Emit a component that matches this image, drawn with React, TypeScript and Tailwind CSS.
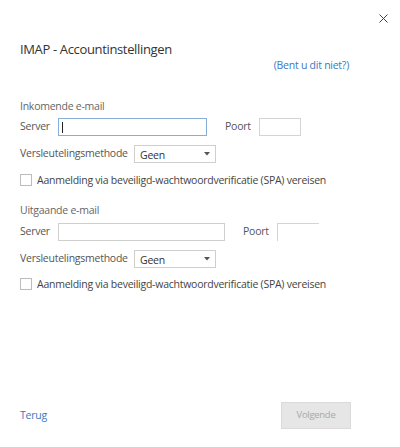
// IMAP-accountinstellingen dialoog (Outlook-stijl)

const Arrow = () => (
  <svg width="6" height="4" viewBox="0 0 6 4" className="text-[#555]">
    <path d="M0 0 H6 L3 3.5 Z" fill="currentColor" />
  </svg>
)

const Select = () => (
  <div className="w-[82px] h-[18px] border border-[#cfcfcf] flex items-center justify-between pl-[5px] pr-[5px] text-[10.5px] tracking-[-0.25px] text-[#333]">
    <span className="leading-none pt-[2px]">Geen</span>
    <Arrow />
  </div>
)

const Checkbox = ({ label }: { label: string }) => (
  <label className="flex items-center h-[12px]">
    <span className="w-[12px] h-[12px] border border-[#bdbdbd] bg-white shrink-0" />
    <span className="ml-[5px] text-[10.5px] tracking-[-0.25px] text-[#444] leading-none">{label}</span>
  </label>
)

const ServerSection = ({
  title,
  serverWidth,
  focused,
  titleGap,
  rowGap,
}: {
  title: string
  serverWidth: string
  focused?: boolean
  titleGap: string
  rowGap: string
}) => (
  <section className="flex flex-col text-[10.5px] tracking-[-0.25px]">
    <h2 className="leading-[14px] text-[#666]">{title}</h2>
    <div className={`flex items-center h-[18px] ${titleGap}`}>
      <span className="w-[38px] text-[#555]">Server</span>
      {focused ? (
        <div className={`${serverWidth} h-[18px] border border-[#86aedb] flex items-center pl-[3px]`}>
          <span className="w-px h-[11px] bg-[#222]" />
        </div>
      ) : (
        <div className={`${serverWidth} h-[18px] border border-[#cfcfcf]`} />
      )}
      <span className="ml-[18px] w-[34px] text-[#555]">Poort</span>
      {focused ? (
        <div className="w-[42px] h-[18px] border border-[#d4d4d4]" />
      ) : (
        <div className="w-[42px] h-[18px] border-l border-t border-[#d4d4d4]" />
      )}
    </div>
    <div className="flex items-center h-[18px] mt-[9px]">
      <span className="w-[114px] text-[#555]">Versleutelingsmethode</span>
      <Select />
    </div>
    <div className={rowGap}>
      <Checkbox label="Aanmelding via beveiligd-wachtwoordverificatie (SPA) vereisen" />
    </div>
  </section>
)

export default function App() {
  return (
    <div className="w-[400px] h-[447px] bg-white flex flex-col font-['Open_Sans',sans-serif] pl-[20px]">
      <div className="flex justify-end pt-[14px] pr-[12px]">
        <svg width="9" height="9" viewBox="0 0 9 9" className="text-[#444]">
          <path d="M0.5 0.5 L8.5 8.5 M8.5 0.5 L0.5 8.5" stroke="currentColor" strokeWidth="1" />
        </svg>
      </div>

      <h1 className="mt-[18px] text-[13px] tracking-[-0.35px] leading-[16px] text-[#333]">
        IMAP - Accountinstellingen
      </h1>
      <div className="flex justify-end pr-[51px] mt-[1px]">
        <a className="text-[10.5px] tracking-[-0.25px] leading-[14px] text-[#3a78c2]">(Bent u dit niet?)</a>
      </div>

      <div className="mt-[27px]">
        <ServerSection
          title="Inkomende e-mail"
          serverWidth="w-[149px]"
          focused
          titleGap="mt-[5px]"
          rowGap="mt-[11px]"
        />
      </div>

      <div className="mt-[17px]">
        <ServerSection
          title="Uitgaande e-mail"
          serverWidth="w-[167px]"
          titleGap="mt-[6px]"
          rowGap="mt-[10px]"
        />
      </div>

      <footer className="mt-auto mb-[18px] flex items-center justify-between pr-[49px]">
        <a className="text-[10.5px] tracking-[-0.25px] text-[#3a78c2]">Terug</a>
        <button
          type="button"
          disabled
          className="w-[70px] h-[27px] bg-[#e6e6e6] border border-[#dadada] text-[9.5px] tracking-[-0.3px] text-[#a8a8a8]"
        >
          Volgende
        </button>
      </footer>
    </div>
  )
}
